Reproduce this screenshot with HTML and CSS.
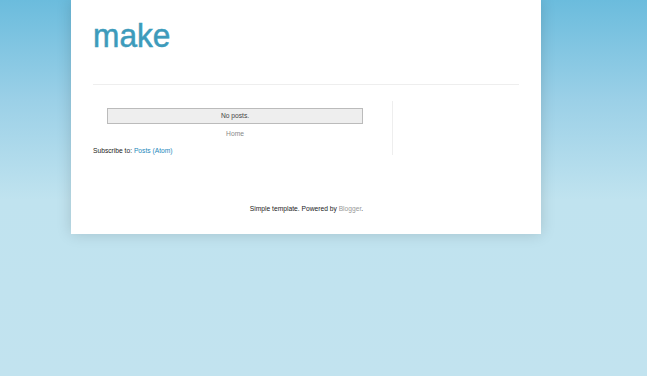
FILE: index.html
```html
<!DOCTYPE html>
<html>
<head>
<meta charset="utf-8">
<link rel="stylesheet" href="styles.css">
</head>
<body>
<div class="page">
  <div class="content">
    <header class="header">
      <h1 class="title">make</h1>
    </header>
    <div class="columns">
      <main class="main">
        <div class="noposts">No posts.</div>
        <div class="home">Home</div>
        <div class="subscribe">Subscribe to: <a href="#">Posts (Atom)</a></div>
      </main>
      <aside class="sidebar"></aside>
    </div>
    <footer class="footer">Simple template. Powered by <a href="#">Blogger</a>.</footer>
  </div>
</div>
</body>
</html>
```
FILE: styles.css
```css
html, body {
  margin: 0;
  padding: 0;
}
body {
  height: 376px;
  overflow: hidden;
  background: linear-gradient(to bottom, #6bbcdd 0px, #9bd0e7 100px, #c0e3ef 200px, #c2e3ef 376px);
  font-family: "Liberation Sans", Arial, sans-serif;
  font-size: 6.7px;
  color: #222;
}
.page {
  padding-left: 71px;
}
.content {
  width: 470px;
  height: 234px;
  background: #fff;
  box-shadow: 0 0 14px rgba(0, 0, 0, 0.15);
  box-sizing: border-box;
  padding: 0 22px;
}
.header {
  height: 85px;
  border-bottom: 1px solid #eeeeee;
  box-sizing: border-box;
}
.title {
  margin: 0;
  padding-top: 16px;
  font-weight: normal;
  font-size: 33px;
  line-height: 40px;
  color: #3d9bbb;
  transform: scaleX(0.96);
  transform-origin: left;
  display: inline-block;
  -webkit-text-stroke: 0.5px #3d9bbb;
}
.columns {
  display: flex;
  margin-top: 16px;
}
.main {
  width: 300px;
  border-right: 1px solid #eeeeee;
  height: 54px;
  box-sizing: border-box;
}
.noposts {
  margin: 7px 0 0 14px;
  width: 256px;
  height: 16px;
  box-sizing: border-box;
  background: #eeeeee;
  border: 1px solid #bbbbbb;
  text-align: center;
  line-height: 14px;
  color: #444;
}
.home {
  width: 284px;
  text-align: center;
  margin-top: 5px;
  color: #888;
  line-height: 10px;
}
.subscribe {
  margin-top: 7px;
  line-height: 10px;
}
a {
  color: #2288bb;
  text-decoration: none;
}
.footer {
  margin-top: 49px;
  text-align: center;
  line-height: 10px;
  padding-left: 1px;
}
.footer a {
  color: #999;
}
```
